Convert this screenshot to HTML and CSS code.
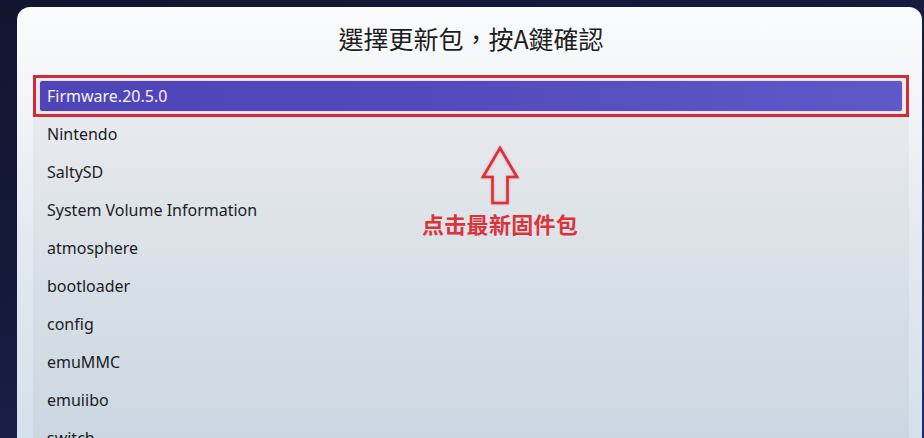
FILE: index.html
```html
<!doctype html>
<html lang="zh-Hant">
  <head>
    <meta charset="UTF-8" />
    <meta name="viewport" content="width=device-width, initial-scale=1.0" />
    <title>選擇更新包</title>
    <link rel="stylesheet" href="styles.css">
  </head>
  <body>
    <div class="panel">
      <h1 class="title">選擇更新包，按A鍵確認</h1>

      <ul class="file-list">
        <li class="row selected"><span class="bar">Firmware.20.5.0</span></li>
        <li class="row">Nintendo</li>
        <li class="row">SaltySD</li>
        <li class="row">System Volume Information</li>
        <li class="row">atmosphere</li>
        <li class="row">bootloader</li>
        <li class="row">config</li>
        <li class="row">emuMMC</li>
        <li class="row">emuiibo</li>
        <li class="row">switch</li>
      </ul>

      <!-- annotation over the list -->
      <div class="hint">
        <svg class="hint-arrow" width="40" height="60" viewBox="0 0 40 60">
          <path d="M20 3 L37 32 L27.5 32 L27.5 58 L12.5 58 L12.5 32 L3 32 Z"
                fill="none" stroke="#dc2f38" stroke-width="2.6" stroke-linejoin="miter" />
        </svg>
        <div class="hint-text">点击最新固件包</div>
      </div>
    </div>
  </body>
</html>
```

FILE: styles.css
```css
html, body {
  height: 100%;
}

body {
  margin: 0;
  overflow: hidden;
  background: linear-gradient(160deg, #12152e 0%, #161b3f 45%, #232c6a 100%);
  font-family: "Noto Sans", "Open Sans", sans-serif;
}

.panel {
  position: relative;
  margin: 7px 0 0 17px;
  width: 905px;
  height: 431px;
  box-sizing: border-box;
  padding: 0 13px 0 16px;
  border-radius: 13px 13px 0 0;
  background: linear-gradient(180deg, #fafbfd 0%, #f3f5f8 20%, #e2e9ef 55%, #d3e1ec 100%);
}

.title {
  margin: 0;
  height: 70px;
  line-height: 62px;
  text-align: center;
  font-family: "Noto Sans CJK TC", sans-serif;
  font-weight: 400;
  font-size: 25px;
  color: #1e1e22;
}

.file-list {
  list-style: none;
  margin: 0;
  padding: 0 2px;
  height: 361px;
  background: linear-gradient(180deg, #ecedf0 0%, #dfe4e9 35%, #cad7e2 100%);
}

.row {
  height: 38px;
  line-height: 38px;
  padding-left: 12px;
  font-size: 16px;
  color: #1c1c1f;
  white-space: nowrap;
}

.row.selected {
  box-sizing: border-box;
  padding: 3px 4px;
  outline: 3px solid #d22a36;
  outline-offset: -1px;
  line-height: normal;
}

.bar {
  display: block;
  height: 32px;
  line-height: 31px;
  box-sizing: border-box;
  padding-left: 7px;
  border: 1px solid #f3d9e6;
  border-radius: 3px;
  background: linear-gradient(90deg, #4f44b7 0%, #554abd 50%, #5e59c9 100%);
  color: #f4f3ff;
}

.hint {
  position: absolute;
  left: 405px;
  top: 138px;
  display: flex;
  flex-direction: column;
  align-items: center;
  gap: 5px;
}

.hint-arrow {
  display: block;
  filter: drop-shadow(0 0 1px rgba(230, 60, 70, 0.5));
}

.hint-text {
  font-family: "Noto Sans CJK SC", sans-serif;
  font-weight: 700;
  font-size: 22px;
  line-height: 26px;
  color: #dc333b;
  letter-spacing: 0.3px;
}
```
